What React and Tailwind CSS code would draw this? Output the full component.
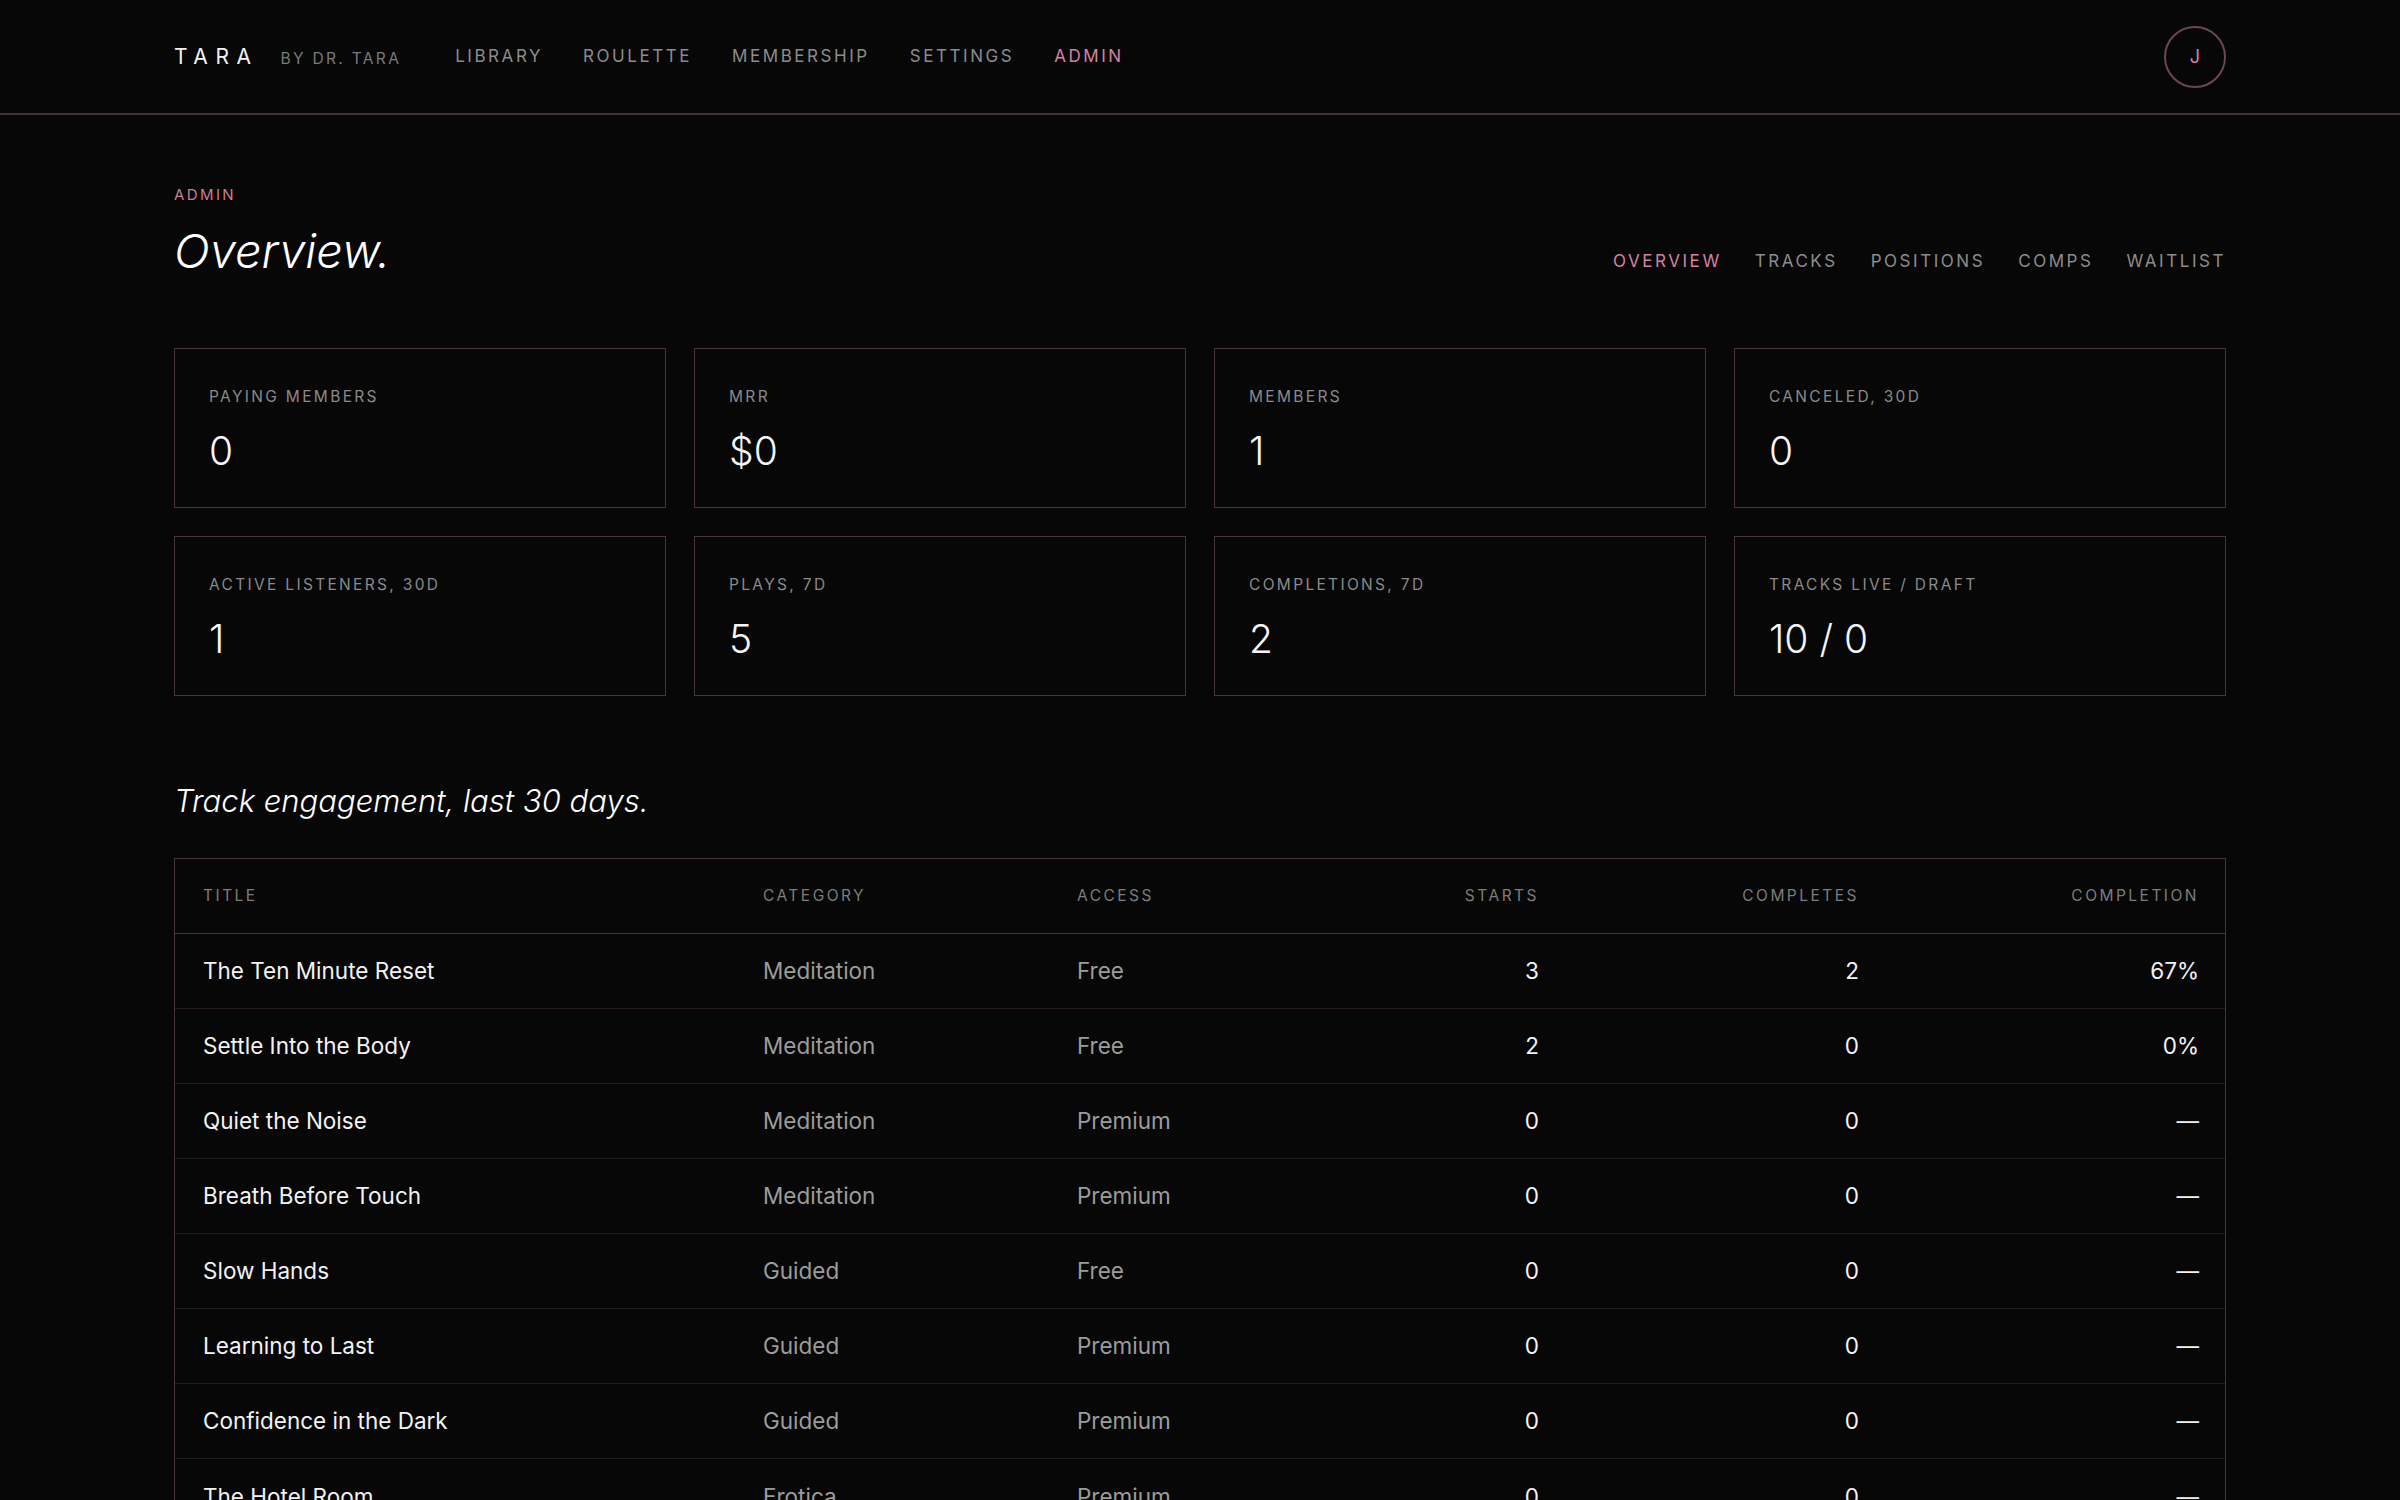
import React from 'react';

const NAV = ['Library', 'Roulette', 'Membership', 'Settings', 'Admin'];
const TABS = ['Overview', 'Tracks', 'Positions', 'Comps', 'Waitlist'];

const STATS = [
  { label: 'Paying members', value: '0' },
  { label: 'MRR', value: '$0' },
  { label: 'Members', value: '1' },
  { label: 'Canceled, 30d', value: '0' },
  { label: 'Active listeners, 30d', value: '1' },
  { label: 'Plays, 7d', value: '5' },
  { label: 'Completions, 7d', value: '2' },
  { label: 'Tracks live / draft', value: '10 / 0' },
];

const TRACKS = [
  { title: 'The Ten Minute Reset', category: 'Meditation', access: 'Free', starts: 3, completes: 2 },
  { title: 'Settle Into the Body', category: 'Meditation', access: 'Free', starts: 2, completes: 0 },
  { title: 'Quiet the Noise', category: 'Meditation', access: 'Premium', starts: 0, completes: 0 },
  { title: 'Breath Before Touch', category: 'Meditation', access: 'Premium', starts: 0, completes: 0 },
  { title: 'Slow Hands', category: 'Guided', access: 'Free', starts: 0, completes: 0 },
  { title: 'Learning to Last', category: 'Guided', access: 'Premium', starts: 0, completes: 0 },
  { title: 'Confidence in the Dark', category: 'Guided', access: 'Premium', starts: 0, completes: 0 },
  { title: 'The Hotel Room', category: 'Erotica', access: 'Premium', starts: 0, completes: 0 },
];

const cols = 'grid grid-cols-[560px_314px_314px_204px_320px_340px]';

function StatCard({ label, value }) {
  return (
    <div className="border border-[#4a323d] h-[160px] px-[34px] pt-[40px]">
      <div className="text-[15.5px] tracking-[0.15em] uppercase text-[#8a8a8a] leading-none">{label}</div>
      <div className="text-[39px] font-light text-[#f5f5f5] leading-none mt-[26px]">{value}</div>
    </div>
  );
}

export default function App() {
  return (
    <div className="min-h-screen bg-[#070707] text-white" style={{ fontFamily: 'Inter, "Noto Sans", sans-serif' }}>
      {/* Top bar */}
      <header className="h-[115px] border-b-2 border-[#45303a]">
        <div className="w-[2052px] mx-auto h-full flex items-center">
          <div className="flex items-baseline gap-[22px]">
            <span className="text-[21px] tracking-[0.36em] text-[#f2f2f2]">TARA</span>
            <span className="text-[15.5px] tracking-[0.15em] text-[#7a7a7a]">BY DR. TARA</span>
          </div>
          <nav className="flex items-center gap-[40px] ml-[54px]">
            {NAV.map(n => (
              <span
                key={n}
                className={`text-[17px] tracking-[0.15em] uppercase ${n === 'Admin' ? 'text-[#d283a3]' : 'text-[#8c8c8c]'}`}
              >
                {n}
              </span>
            ))}
          </nav>
          <div className="ml-auto w-[62px] h-[62px] rounded-full border-2 border-[#6b4656] flex items-center justify-center text-[#d283a3] text-[18px]">
            J
          </div>
        </div>
      </header>

      <main className="w-[2052px] mx-auto pt-[72px] pb-20">
        <div className="flex items-end justify-between">
          <div>
            <div className="text-[15px] tracking-[0.16em] text-[#c97b9a] leading-none">ADMIN</div>
            <h1 className="italic text-[47px] font-light text-white leading-none mt-[25px]">Overview.</h1>
          </div>
          <div className="flex items-center gap-[33px] mb-[4px]">
            {TABS.map(t => (
              <span
                key={t}
                className={`text-[17px] tracking-[0.15em] uppercase leading-none ${t === 'Overview' ? 'text-[#d283a3]' : 'text-[#8c8c8c]'}`}
              >
                {t}
              </span>
            ))}
          </div>
        </div>

        <div className="grid grid-cols-4 gap-[28px] mt-[74px]">
          {STATS.map(s => <StatCard key={s.label} {...s} />)}
        </div>

        <h2 className="italic text-[31px] font-light text-white leading-none mt-[89px]">Track engagement, last 30 days.</h2>

        <div className="border border-[#4a323d] mt-[42px]">
          <div className={`${cols} h-[75px] items-center border-b border-[#4a323d] text-[15.5px] tracking-[0.16em] uppercase text-[#7c7c7c]`}>
            <div className="pl-[28px]">Title</div>
            <div className="pl-[28px]">Category</div>
            <div className="pl-[28px]">Access</div>
            <div className="pr-[28px] text-right">Starts</div>
            <div className="pr-[28px] text-right">Completes</div>
            <div className="pr-[28px] text-right">Completion</div>
          </div>
          {TRACKS.map((t, i) => (
            <div
              key={t.title}
              className={`${cols} h-[75px] items-center text-[22.5px] ${i < TRACKS.length - 1 ? 'border-b border-[#241a1f]' : ''}`}
            >
              <div className="pl-[28px] text-[#f2f2f2]">{t.title}</div>
              <div className="pl-[28px] text-[#9c9c9c]">{t.category}</div>
              <div className="pl-[28px] text-[#9c9c9c]">{t.access}</div>
              <div className="pr-[28px] text-right text-[#f2f2f2]">{t.starts}</div>
              <div className="pr-[28px] text-right text-[#f2f2f2]">{t.completes}</div>
              <div className="pr-[28px] text-right text-[#f2f2f2]">
                {t.starts > 0 ? `${Math.round((t.completes / t.starts) * 100)}%` : '—'}
              </div>
            </div>
          ))}
        </div>
      </main>
    </div>
  );
}
